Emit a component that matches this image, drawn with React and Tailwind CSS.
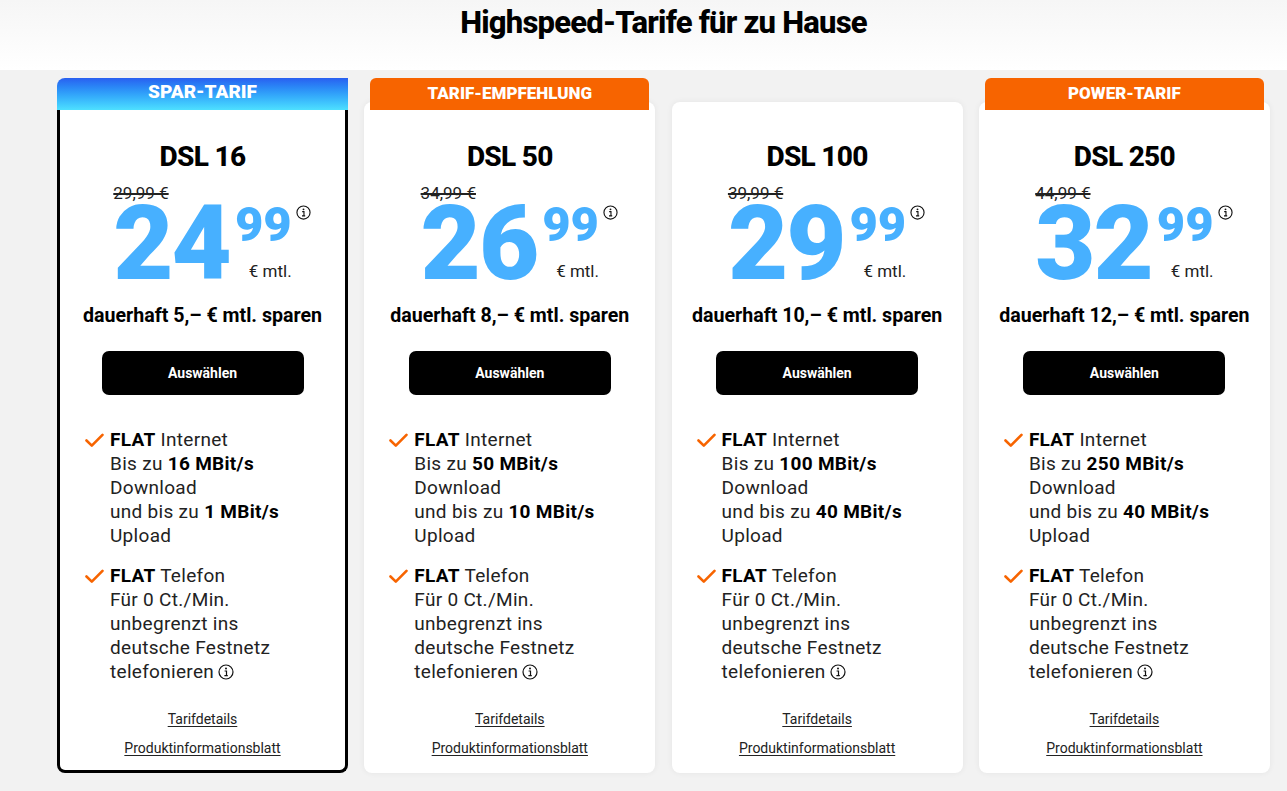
import React from 'react'

const FONT = { fontFamily: 'Roboto, "Liberation Sans", sans-serif' }

const TARIFFS = [
  { name: 'DSL 16', old: '29,99 €', euro: '24', cent: '99', save: 'dauerhaft 5,– € mtl. sparen', down: '16 MBit/s', up: '1 MBit/s', badge: 'SPAR-TARIF', kind: 'spar' },
  { name: 'DSL 50', old: '34,99 €', euro: '26', cent: '99', save: 'dauerhaft 8,– € mtl. sparen', down: '50 MBit/s', up: '10 MBit/s', badge: 'TARIF-EMPFEHLUNG', kind: 'orange' },
  { name: 'DSL 100', old: '39,99 €', euro: '29', cent: '99', save: 'dauerhaft 10,– € mtl. sparen', down: '100 MBit/s', up: '40 MBit/s', badge: null, kind: 'plain' },
  { name: 'DSL 250', old: '44,99 €', euro: '32', cent: '99', save: 'dauerhaft 12,– € mtl. sparen', down: '250 MBit/s', up: '40 MBit/s', badge: 'POWER-TARIF', kind: 'orange' },
]

// ─── small icons ─────────────────────────────────────────────────────────────
function InfoIcon({ size = 15 }) {
  return (
    <svg width={size} height={size} viewBox="0 0 16 16" className="inline-block">
      <circle cx="8" cy="8" r="7" fill="none" stroke="#111" strokeWidth="1.2" />
      <circle cx="8" cy="4.6" r="1" fill="#111" />
      <path d="M6.6 7h1.9v4.6 M6.4 11.6h3.4" fill="none" stroke="#111" strokeWidth="1.2" />
    </svg>
  )
}

function Check() {
  return (
    <svg width="19" height="15" viewBox="0 0 19 15" className="shrink-0 mt-[5px]">
      <path d="M1.5 7.5 L6.8 12.6 L17.5 1.8" fill="none" stroke="#f76400" strokeWidth="2.6" strokeLinecap="round" strokeLinejoin="round" />
    </svg>
  )
}

// ─── Card ────────────────────────────────────────────────────────────────────
function TariffCard({ t }) {
  const spar = t.kind === 'spar'
  return (
    <div className="relative pt-6 w-[291px]">
      {t.badge && (
        <div
          className={`absolute top-0 h-[32px] flex items-start justify-center text-white font-black z-10 ${
            spar
              ? 'left-0 right-0 rounded-tl-[8px] bg-gradient-to-b from-[#2a5ff0] to-[#4ee0ff] text-[19px] pt-0'
              : 'left-[6px] right-[6px] rounded-t-[6px] bg-[#f76400] text-[17px] pt-[3px]'
          }`}
        >
          {t.badge}
        </div>
      )}
      <div
        className={`bg-white flex flex-col items-center h-[671px] pt-[38px] ${
          spar
            ? 'border-[3px] border-black border-t-0 rounded-b-[8px]'
            : 'rounded-[8px] shadow-[0_0_6px_rgba(0,0,0,0.06)]'
        }`}
      >
        <h2 className="text-[28px] leading-[34px] font-extrabold text-black tracking-tight">{t.name}</h2>

        {/* price */}
        <div className="relative mt-[11px] flex flex-col items-start">
          <span className="text-[17px] leading-[16px] text-[#222] line-through decoration-[1.5px]">{t.old}</span>
          <div className="flex items-start mt-[3px]">
            <span className="text-[104px] leading-[80px] font-black text-[#47b0ff] tracking-[-2px]">{t.euro}</span>
            <div className="flex flex-col items-end ml-[5px]">
              <span className="text-[49px] leading-[46px] font-black text-[#47b0ff] -mt-[2px]">{t.cent}</span>
              <span className="text-[17px] leading-[20px] text-[#222] mt-[13px]">€ mtl.</span>
            </div>
          </div>
          <span className="absolute right-[-19px] top-[15px]"><InfoIcon /></span>
        </div>

        <p className="mt-[20px] text-[19.6px] leading-[24px] font-bold text-black">{t.save}</p>

        <button className="mt-[23px] w-[202px] h-[44px] rounded-[7px] bg-black text-white text-[14px] font-bold">
          Auswählen
        </button>

        {/* features */}
        <div className="self-stretch pl-[25px] mt-[33px] flex flex-col gap-[16px] text-[19px] leading-[24px] tracking-[0.3px] text-[#222]">
          <div className="flex gap-[6px]">
            <Check />
            <div>
              <div><b className="font-bold text-black">FLAT</b> Internet</div>
              <div>Bis zu <b className="font-bold text-black">{t.down}</b></div>
              <div>Download</div>
              <div>und bis zu <b className="font-bold text-black">{t.up}</b></div>
              <div>Upload</div>
            </div>
          </div>
          <div className="flex gap-[6px]">
            <Check />
            <div>
              <div><b className="font-bold text-black">FLAT</b> Telefon</div>
              <div>Für 0 Ct./Min.</div>
              <div>unbegrenzt ins</div>
              <div>deutsche Festnetz</div>
              <div className="flex items-center gap-[4px]">telefonieren <InfoIcon size={16} /></div>
            </div>
          </div>
        </div>

        <div className={`mt-auto flex flex-col items-center gap-[11px] text-[14px] leading-[18px] text-[#222] ${spar ? 'mb-[13px]' : 'mb-[16px]'}`}>
          <a className="underline underline-offset-2">Tarifdetails</a>
          <a className="underline underline-offset-2">Produktinformationsblatt</a>
        </div>
      </div>
    </div>
  )
}

export default function App() {
  return (
    <div className="min-h-[791px] bg-[#f2f2f2]" style={FONT}>
      <div className="h-[70px] bg-gradient-to-b from-[#f6f6f6] to-white flex justify-center pt-[5px] pl-[40px]">
        <h1 className="text-[31px] leading-[36px] font-extrabold text-black tracking-tight">Highspeed-Tarife für zu Hause</h1>
      </div>
      <div className="flex gap-[16.3px] pl-[57px] pt-[8px]">
        {TARIFFS.map(t => (
          <TariffCard key={t.name} t={t} />
        ))}
      </div>
    </div>
  )
}
